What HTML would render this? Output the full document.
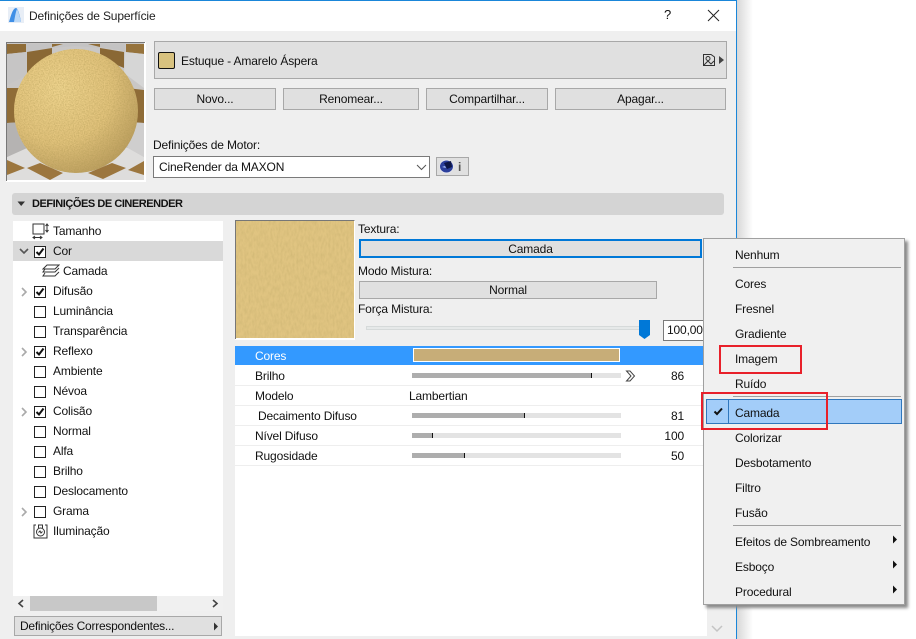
<!DOCTYPE html>
<html><head><meta charset="utf-8">
<style>
html,body{margin:0;padding:0;background:#fff}
#p{position:relative;width:916px;height:639px;overflow:hidden;background:#fff;font:12px/14px "Liberation Sans",sans-serif;letter-spacing:-.15px;color:#111}
#p div,#p svg{position:absolute}
.t{white-space:nowrap;height:14px}
.b{background:#e0e0e0;border:1px solid #a8a8a8;box-sizing:border-box;text-align:center}
.cb{left:34px;width:10px;height:10px;margin-top:1px;border:1px solid #222;background:#fff;box-sizing:content-box}
.row{left:235px;width:472px;height:20px;border-bottom:1px solid #eee;box-sizing:border-box}
.bar{left:412px;width:209px;height:5px;background:#e3e3e3}
.fill{left:412px;height:5px;background:#adadad;border-right:1px solid #111}
.m{left:735px}
.sep{left:733px;width:168px;height:1px;background:#a0a0a0}
.red{border:2px solid #e8202a;box-sizing:border-box}
</style></head><body><div id="p">
<svg width="0" height="0" style="position:absolute"><defs>
<filter id="n1" x="0" y="0" width="100%" height="100%"><feTurbulence type="fractalNoise" baseFrequency="0.8" numOctaves="2" seed="3"/><feColorMatrix values="0 0 0 0 .4 0 0 0 0 .3 0 0 0 0 .08 1.8 0 0 0 -.6"/></filter>
<filter id="n2" x="0" y="0" width="100%" height="100%"><feTurbulence type="fractalNoise" baseFrequency="0.5 0.18" numOctaves="3" seed="8"/><feColorMatrix values="0 0 0 0 .55 0 0 0 0 .42 0 0 0 0 .15 1.8 0 0 0 -.6"/></filter>
<radialGradient id="sg" cx=".36" cy=".32" r=".78"><stop offset="0" stop-color="#f0d58f"/><stop offset=".55" stop-color="#e2c37c"/><stop offset="1" stop-color="#b5985a"/></radialGradient>
<clipPath id="sc"><circle cx="69" cy="68" r="62"/></clipPath>
</defs></svg>

<!-- window -->
<div style="left:0;top:0;width:737px;height:639px;background:#efefef;border-top:1px solid #1a86d9;border-right:1px solid #1a86d9;box-sizing:border-box"></div>
<div style="left:0;top:1px;width:736px;height:30px;background:#fff"></div>
<div style="left:737px;top:0;width:16px;height:639px;background:linear-gradient(90deg,#d8d8d8,#fff)"></div>
<svg style="left:8px;top:7px" width="16" height="16"><rect width="16" height="16" fill="#e8eef6"/><path d="M1 15 C3 8 5 1 8 1 C10 1 12 9 13 15 Z" fill="#3f8fe6"/><path d="M6 15 C7 9 8 4 9 2 C11 5 12 11 13 15 Z" fill="#bcd9f7"/></svg>
<div class="t" style="left:29px;top:9px;color:#222">Definições de Superfície</div>
<div class="t" style="left:664px;top:8px;font-size:13px">?</div>
<svg style="left:707px;top:9px" width="13" height="13"><path d="M1 1L12 12M12 1L1 12" stroke="#222" stroke-width="1" fill="none"/></svg>

<!-- preview -->
<div style="left:6px;top:42px;width:140px;height:140px;background:#fff"></div>
<svg style="left:7px;top:43px" width="137" height="137" viewBox="0 0 137 137">
<rect width="137" height="137" fill="#c9c7c6"/>
<path d="M0 114L20 105L68 100L121 105L137 114V137H0Z" fill="#dedddc"/>
<path d="M19 1H45V5L19 9Z M56 1H81L93 4V5L68 3L45 5V4Z M93 1H118V8L93 4Z" fill="#c4c3c3"/>
<path d="M0 1H19V9L0 11Z" fill="#8f6c37"/>
<path d="M45 1H56L45 4Z M81 1H93V4Z" fill="#8f6c37"/>
<path d="M20 9L45 5V15L20 32Z" fill="#8a6835"/>
<path d="M93 5L117 9V25L93 15Z" fill="#8a6835"/>
<path d="M119 1H137V11L119 9Z" fill="#96733c"/>
<path d="M118 9L137 11V45L117 30Z" fill="#d6d6d6"/>
<path d="M0 11L19 9L20 32L0 42Z" fill="#c6c5c5"/>
<path d="M0 45H20V79L0 80Z" fill="#8f6c37"/>
<path d="M120 45L137 47V80L120 79Z" fill="#8f6c37"/>
<path d="M0 80L15 79L20 105L0 114Z" fill="#b5b3b2"/>
<path d="M122 79L137 80V114L121 105Z" fill="#cfcece"/>
<path d="M0 117L18 125L0 132Z" fill="#9c763e"/>
<path d="M20 125L33 120L56 130L43 137Z" fill="#9c763e"/>
<path d="M81 130L105 120L119 125L96 136Z" fill="#9c763e"/>
<path d="M121 127L137 118V132Z" fill="#9c763e"/>
<circle cx="69" cy="68" r="62" fill="url(#sg)"/>
<g clip-path="url(#sc)"><rect x="7" y="6" width="124" height="124" filter="url(#n1)" opacity=".5"/></g>
</svg>
<div style="left:6px;top:42px;width:139px;height:139px;border-top:1px solid #777;border-left:1px solid #777;box-sizing:border-box"></div>

<!-- name bar -->
<div class="b" style="left:154px;top:41px;width:573px;height:38px"></div>
<div style="left:158px;top:52px;width:17px;height:17px;background:#d8c27f;border:1px solid #111;border-radius:2px;box-sizing:border-box"></div>
<div class="t" style="left:181px;top:54px">Estuque - Amarelo Áspera</div>
<svg style="left:702px;top:53px" width="24" height="14"><path d="M1.5 1.5H9L12.5 4V12.5H1.5Z" fill="none" stroke="#333"/><circle cx="6" cy="5.5" r="2" fill="none" stroke="#333"/><path d="M2 12L6 8L9 11L12 8" fill="none" stroke="#333"/><path d="M17 3L22 7L17 11Z" fill="#444"/></svg>

<!-- buttons -->
<div class="b" style="left:154px;top:88px;width:122px;height:22px;padding-top:3px">Novo...</div>
<div class="b" style="left:283px;top:88px;width:136px;height:22px;padding-top:3px">Renomear...</div>
<div class="b" style="left:426px;top:88px;width:122px;height:22px;padding-top:3px">Compartilhar...</div>
<div class="b" style="left:555px;top:88px;width:171px;height:22px;padding-top:3px">Apagar...</div>

<div class="t" style="left:153px;top:138px">Definições de Motor:</div>
<div style="left:153px;top:156px;width:277px;height:22px;background:#fff;border:1px solid #7a7a7a;box-sizing:border-box"></div>
<div class="t" style="left:159px;top:160px">CineRender da MAXON</div>
<svg style="left:416px;top:164px" width="11" height="7"><path d="M1 1L5.5 5.5L10 1" fill="none" stroke="#555"/></svg>
<div class="b" style="left:436px;top:157px;width:33px;height:19px"></div>
<svg style="left:439px;top:159px" width="16" height="15"><circle cx="7.5" cy="7.5" r="7" fill="#e8e8ee"/><ellipse cx="7.5" cy="7.5" rx="6.5" ry="6" fill="#2b3f9c"/><path d="M5 4L12 2L13 8L8 10Z" fill="#0d1646"/><path d="M3 8L6 7L7 9Z" fill="#a9c0f5"/></svg>
<div class="t" style="left:458px;top:160px;font-weight:bold;color:#555">i</div>

<!-- section -->
<div style="left:12px;top:193px;width:712px;height:22px;background:#d4d4d4;border-radius:3px"></div>
<svg style="left:17px;top:201px" width="9" height="6"><path d="M0.5 0.5H8L4.2 5Z" fill="#333"/></svg>
<div class="t" style="left:32px;top:197px;font-weight:bold;letter-spacing:-.45px;font-size:11px">DEFINIÇÕES DE CINERENDER</div>

<!-- list -->
<div style="left:13px;top:221px;width:210px;height:375px;background:#fff"></div>
<div style="left:13px;top:241px;width:210px;height:20px;background:#d9d9d9"></div>
<svg style="left:32px;top:223px" width="18" height="17"><rect x="1" y="1" width="11" height="10" fill="none" stroke="#333"/><path d="M15 1V9M13.5 3L15 1L16.5 3M13.5 7L15 9L16.5 7M1 14.5H10M3 13L1 14.5L3 16M8 13L10 14.5L8 16" fill="none" stroke="#333"/></svg>
<div class="t" style="left:53px;top:224px">Tamanho</div>

<svg style="left:19px;top:248px" width="10" height="7"><path d="M1 1L5 5L9 1" fill="none" stroke="#555" stroke-width="1.6"/></svg>
<div class="cb" style="top:245px"></div>
<svg style="left:34px;top:246px" width="12" height="12"><path d="M2.5 6L5 8.5L9.5 2.5" fill="none" stroke="#111" stroke-width="2"/></svg>
<div class="t" style="left:53px;top:244px">Cor</div>

<svg style="left:42px;top:264px" width="18" height="15"><path d="M5 1H17L13 5H1Z M3 5L1 8H13L17 4 M3 9L1 12H13L17 8" fill="none" stroke="#333"/></svg>
<div class="t" style="left:63px;top:264px">Camada</div>

<svg style="left:21px;top:287px" width="7" height="10"><path d="M1 1L5 5L1 9" fill="none" stroke="#aaa" stroke-width="1.6"/></svg>
<div class="cb" style="top:285px"></div>
<svg style="left:34px;top:286px" width="12" height="12"><path d="M2.5 6L5 8.5L9.5 2.5" fill="none" stroke="#111" stroke-width="2"/></svg>
<div class="t" style="left:53px;top:284px">Difusão</div>

<div class="cb" style="top:305px"></div>
<div class="t" style="left:53px;top:304px">Luminância</div>
<div class="cb" style="top:325px"></div>
<div class="t" style="left:53px;top:324px">Transparência</div>

<svg style="left:21px;top:347px" width="7" height="10"><path d="M1 1L5 5L1 9" fill="none" stroke="#aaa" stroke-width="1.6"/></svg>
<div class="cb" style="top:345px"></div>
<svg style="left:34px;top:346px" width="12" height="12"><path d="M2.5 6L5 8.5L9.5 2.5" fill="none" stroke="#111" stroke-width="2"/></svg>
<div class="t" style="left:53px;top:344px">Reflexo</div>

<div class="cb" style="top:365px"></div>
<div class="t" style="left:53px;top:364px">Ambiente</div>
<div class="cb" style="top:385px"></div>
<div class="t" style="left:53px;top:384px">Névoa</div>

<svg style="left:21px;top:407px" width="7" height="10"><path d="M1 1L5 5L1 9" fill="none" stroke="#aaa" stroke-width="1.6"/></svg>
<div class="cb" style="top:405px"></div>
<svg style="left:34px;top:406px" width="12" height="12"><path d="M2.5 6L5 8.5L9.5 2.5" fill="none" stroke="#111" stroke-width="2"/></svg>
<div class="t" style="left:53px;top:404px">Colisão</div>

<div class="cb" style="top:425px"></div>
<div class="t" style="left:53px;top:424px">Normal</div>
<div class="cb" style="top:445px"></div>
<div class="t" style="left:53px;top:444px">Alfa</div>
<div class="cb" style="top:465px"></div>
<div class="t" style="left:53px;top:464px">Brilho</div>
<div class="cb" style="top:485px"></div>
<div class="t" style="left:53px;top:484px">Deslocamento</div>
<svg style="left:21px;top:507px" width="7" height="10"><path d="M1 1L5 5L1 9" fill="none" stroke="#aaa" stroke-width="1.6"/></svg>
<div class="cb" style="top:505px"></div>
<div class="t" style="left:53px;top:504px">Grama</div>
<svg style="left:33px;top:523px" width="15" height="16"><path d="M3 2H1V15H14V2H12" fill="none" stroke="#333"/><circle cx="7.5" cy="9" r="4" fill="none" stroke="#333"/><path d="M5.5 5V2H9.5V5M5.5 9.5L7 8L8 10L9.5 8.5" fill="none" stroke="#333"/></svg>
<div class="t" style="left:53px;top:524px">Iluminação</div>

<!-- list scroll -->
<div style="left:13px;top:596px;width:210px;height:15px;background:#f0f0f0"></div>
<div style="left:30px;top:596px;width:127px;height:15px;background:#c8c8c8"></div>
<svg style="left:17px;top:599px" width="8" height="9"><path d="M6 1L2 4.5L6 8" fill="none" stroke="#444" stroke-width="1.6"/></svg>
<svg style="left:211px;top:599px" width="8" height="9"><path d="M2 1L6 4.5L2 8" fill="none" stroke="#444" stroke-width="1.6"/></svg>
<div class="b" style="left:14px;top:616px;width:208px;height:20px;text-align:left;padding:2px 0 0 5px;letter-spacing:-.25px">Definições Correspondentes...</div>
<svg style="left:213px;top:622px" width="6" height="9"><path d="M1 0.5L5 4.5L1 8.5Z" fill="#333"/></svg>

<!-- texture -->
<svg style="left:235px;top:220px" width="120" height="120"><rect width="120" height="120" fill="#fff"/><rect x="1" y="0" width="118" height="118" fill="#e0c481"/><rect x="1" y="0" width="118" height="118" filter="url(#n2)" opacity=".45"/><path d="M.5 119V.5H119.5" fill="none" stroke="#777"/></svg>
<div class="t" style="left:358px;top:222px">Textura:</div>
<div class="b" style="left:359px;top:239px;width:343px;height:19px;border:2px solid #0078d7;padding-top:1px">Camada</div>
<div class="t" style="left:358px;top:264px">Modo Mistura:</div>
<div class="b" style="left:359px;top:281px;width:298px;height:18px;padding-top:1px">Normal</div>
<div class="t" style="left:358px;top:302px">Força Mistura:</div>
<div style="left:366px;top:326px;width:275px;height:4px;background:#e6e9e9;border:1px solid #d6dada;box-sizing:border-box"></div>
<svg style="left:639px;top:320px" width="11" height="19"><path d="M0 0H11V15L5.5 19L0 15Z" fill="#0078d7"/></svg>
<div style="left:663px;top:320px;width:42px;height:21px;background:#fff;border:1px solid #7a7a7a;box-sizing:border-box"></div>
<div class="t" style="left:667px;top:323px">100,000</div>

<!-- table -->
<div style="left:235px;top:346px;width:472px;height:290px;background:#fff"></div>
<div style="left:235px;top:346px;width:472px;height:19px;background:#3399ff"></div>
<div style="left:413px;top:348px;width:207px;height:14px;background:#c7ad78;border:1px solid #fff;box-sizing:border-box"></div>
<div class="t" style="left:255px;top:349px;color:#fff">Cores</div>

<div class="row" style="top:366px"></div><div class="row" style="top:386px"></div><div class="row" style="top:406px"></div><div class="row" style="top:426px"></div><div class="row" style="top:446px"></div>
<div class="t" style="left:255px;top:369px">Brilho</div>
<div class="bar" style="top:373px"></div><div class="fill" style="top:373px;width:179px"></div>
<svg style="left:625px;top:370px" width="11" height="12"><path d="M1.5 1L5 1L9.5 6L5 11H1.5L6 6Z" fill="none" stroke="#444"/></svg>
<div class="t" style="left:640px;top:369px;width:44px;text-align:right">86</div>
<div class="t" style="left:255px;top:389px">Modelo</div>
<div class="t" style="left:409px;top:389px">Lambertian</div>
<div class="t" style="left:258px;top:409px">Decaimento Difuso</div>
<div class="bar" style="top:413px"></div><div class="fill" style="top:413px;width:112px"></div>
<div class="t" style="left:640px;top:409px;width:44px;text-align:right">81</div>
<div class="t" style="left:255px;top:429px">Nível Difuso</div>
<div class="bar" style="top:433px"></div><div class="fill" style="top:433px;width:20px"></div>
<div class="t" style="left:640px;top:429px;width:44px;text-align:right">100</div>
<div class="t" style="left:255px;top:449px">Rugosidade</div>
<div class="bar" style="top:453px"></div><div class="fill" style="top:453px;width:52px"></div>
<div class="t" style="left:640px;top:449px;width:44px;text-align:right">50</div>
<svg style="left:711px;top:625px" width="12" height="8"><path d="M1 1L6 6L11 1" fill="none" stroke="#c4c4c4" stroke-width="1.5"/></svg>

<!-- menu -->
<div style="left:703px;top:238px;width:202px;height:367px;background:#f0f0f0;border:1px solid #a0a0a0;box-sizing:border-box;box-shadow:3px 3px 3px #8a8a8a"></div>
<div class="t m" style="top:248px">Nenhum</div>
<div class="sep" style="top:267px"></div>
<div class="t m" style="top:277px">Cores</div>
<div class="t m" style="top:302px">Fresnel</div>
<div class="t m" style="top:327px">Gradiente</div>
<div class="t m" style="top:352px">Imagem</div>
<div class="t m" style="top:377px">Ruído</div>
<div class="sep" style="top:396px"></div>
<div style="left:706px;top:399px;width:196px;height:25px;background:#a3cdf9;border:1px solid #2f77bd;box-sizing:border-box"></div>
<div style="left:728px;top:399px;width:1px;height:25px;background:#2f77bd"></div>
<svg style="left:713px;top:407px" width="11" height="9"><path d="M1.5 4.5L4 7L9 1.5" fill="none" stroke="#111" stroke-width="2"/></svg>
<div class="t m" style="top:406px">Camada</div>
<div class="t m" style="top:431px">Colorizar</div>
<div class="t m" style="top:456px">Desbotamento</div>
<div class="t m" style="top:481px">Filtro</div>
<div class="t m" style="top:506px">Fusão</div>
<div class="sep" style="top:525px"></div>
<div class="t m" style="top:535px">Efeitos de Sombreamento</div>
<div class="t m" style="top:560px">Esboço</div>
<div class="t m" style="top:585px">Procedural</div>
<svg style="left:892px;top:535px" width="6" height="9"><path d="M1 .5L5 4.5L1 8.5Z" fill="#111"/></svg>
<svg style="left:892px;top:560px" width="6" height="9"><path d="M1 .5L5 4.5L1 8.5Z" fill="#111"/></svg>
<svg style="left:892px;top:585px" width="6" height="9"><path d="M1 .5L5 4.5L1 8.5Z" fill="#111"/></svg>

<div class="red" style="left:719px;top:345px;width:83px;height:29px"></div>
<div class="red" style="left:701px;top:392px;width:127px;height:38px"></div>
</div></body></html>
